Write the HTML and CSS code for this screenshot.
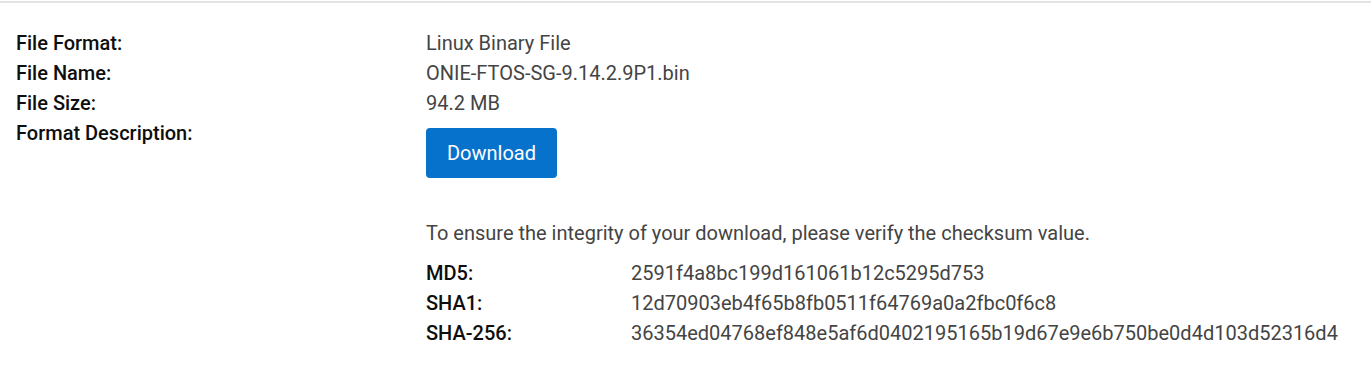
FILE: index.html
```html
<!DOCTYPE html>
<html lang="en">
<head>
    <meta charset="UTF-8">
    <title>Driver Details</title>
    <link rel="stylesheet" href="styles.css">
</head>
<body>
    <div class="file-details">
        <div class="detail-row">
            <div class="detail-label">File Format:</div>
            <div class="detail-value">Linux Binary File</div>
        </div>
        <div class="detail-row">
            <div class="detail-label">File Name:</div>
            <div class="detail-value">ONIE-FTOS-SG-9.14.2.9P1.bin</div>
        </div>
        <div class="detail-row">
            <div class="detail-label">File Size:</div>
            <div class="detail-value">94.2 MB</div>
        </div>
        <div class="detail-row">
            <div class="detail-label">Format Description:</div>
            <div class="detail-value">
                <button class="download-btn">Download</button>
                <p class="checksum-note">To ensure the integrity of your download, please verify the checksum value.</p>
                <div class="checksum-list">
                    <div class="checksum-row">
                        <span class="checksum-label">MD5:</span>
                        <span class="checksum-value">2591f4a8bc199d161061b12c5295d753</span>
                    </div>
                    <div class="checksum-row">
                        <span class="checksum-label">SHA1:</span>
                        <span class="checksum-value">12d70903eb4f65b8fb0511f64769a0a2fbc0f6c8</span>
                    </div>
                    <div class="checksum-row">
                        <span class="checksum-label">SHA-256:</span>
                        <span class="checksum-value">36354ed04768ef848e5af6d0402195165b19d67e9e6b750be0d4d103d52316d4</span>
                    </div>
                </div>
            </div>
        </div>
    </div>
</body>
</html>
```

FILE: styles.css
```css
/* Base Styles */

body {
    margin: 0;
    background-color: #fff;
    font-family: Roboto, "Liberation Sans", sans-serif;
    font-size: 20px;
    line-height: 30px;
    color: #444;
}

.file-details {
    border-top: 2px solid #e4e4e4;
    margin-top: 1px;
    padding: 25px 16px 0;
}

.detail-row {
    display: flex;
}

.detail-label {
    width: 410px;
    flex-shrink: 0;
    font-weight: 500;
    color: #0e0e0e;
}

.detail-value {
    flex: 1;
}

.download-btn {
    display: block;
    margin-top: 10px;
    width: 131px;
    height: 50px;
    padding: 0;
    background-color: #0672cb;
    color: #fff;
    border: none;
    border-radius: 4px;
    font-family: inherit;
    font-size: 20px;
    cursor: pointer;
}

.checksum-note {
    margin: 40px 0 10px;
}

.checksum-row {
    display: flex;
}

.checksum-label {
    width: 205px;
    flex-shrink: 0;
    font-weight: 500;
    color: #0e0e0e;
}
```
